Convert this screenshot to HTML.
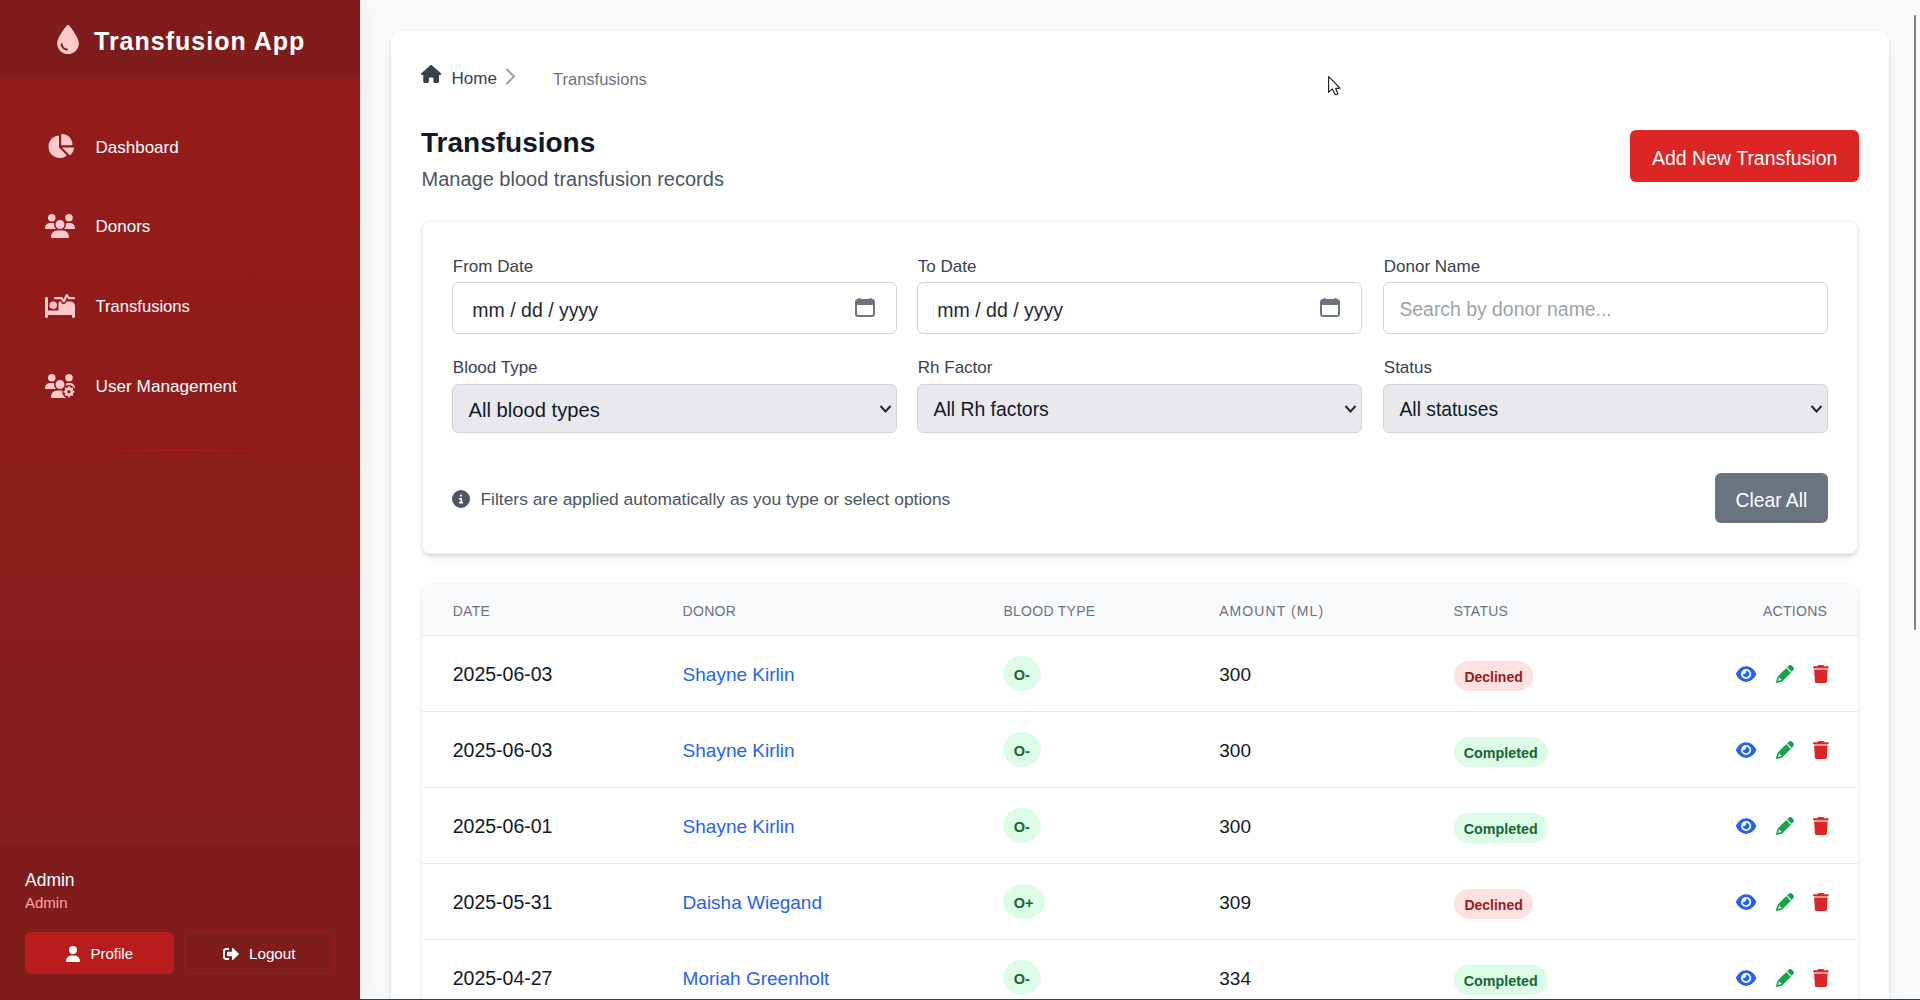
<!DOCTYPE html>
<html><head><meta charset="utf-8"><title>Transfusions</title>
<style>
html,body{margin:0;padding:0;width:1920px;height:1000px;overflow:hidden;background:#f9fafb;font-family:"Liberation Sans",sans-serif;}
.t{position:absolute;white-space:nowrap;line-height:1;}
.b{position:absolute;}
.i{position:absolute;overflow:visible;}
</style></head><body>
<div class="b" style="left:0;top:0;width:360px;height:1000px;z-index:2;box-shadow:2px 0 24px rgba(0,0,0,0.07);">
<div class="b" style="left:0px;top:0px;width:360px;height:1000px;background:linear-gradient(180deg,#991b1b 0%,#7f1d1d 100%);"></div>
<div class="b" style="left:0px;top:0px;width:360px;height:79px;background:#7f1d1d;"></div>
<svg class="i" style="left:57px;top:25px;width:22px;height:29px" viewBox="0 0 384 512" fill="#fecaca"><path d="M192 512C86 512 0 426 0 320C0 228.8 130.2 57.7 166.6 11.7C172.6 4.2 181.5 0 191.1 0h1.8c9.6 0 18.5 4.2 24.5 11.7C253.8 57.7 384 228.8 384 320c0 106-86 192-192 192zM96 336c0-8.8-7.2-16-16-16s-16 7.2-16 16c0 61.9 50.1 112 112 112c8.8 0 16-7.2 16-16s-7.2-16-16-16c-44.2 0-80-35.8-80-80z"/></svg>
<div class="t" style="left:94.0px;top:28.8px;font-size:25px;color:#ffffff;font-weight:700;letter-spacing:0.04em;">Transfusion App</div>
<svg class="i" style="left:46.5px;top:134px;width:27px;height:24px" viewBox="0 0 576 512" fill="#fecaca"><path d="M304 240V16.6c0-9 7-16.6 16-16.6C443.7 0 544 100.3 544 224c0 9-7.6 16-16.6 16H304zM32 272C32 150.7 122.1 50.3 239 34.3c9.2-1.3 17 6.1 17 15.4V288L412.5 444.5c6.7 6.7 6.2 17.7-1.5 23.1C371.8 495.6 323.8 512 272 512C139.5 512 32 404.6 32 272zm526.4 16c9.300 0 16.6 7.8 15.4 17c-7.7 55.9-34.6 105.6-73.9 142.3c-6 5.6-15.4 5.2-21.2-.7L320 288H558.4z"/></svg>
<div class="t" style="left:95.5px;top:138.8px;font-size:17px;color:#ffffff;">Dashboard</div>
<svg class="i" style="left:45.0px;top:214px;width:30px;height:24px" viewBox="0 0 640 512" fill="#fecaca"><path d="M144 0a80 80 0 1 1 0 160A80 80 0 1 1 144 0zM512 0a80 80 0 1 1 0 160A80 80 0 1 1 512 0zM0 298.7C0 239.8 47.8 192 106.7 192h42.7c15.9 0 31 3.5 44.6 9.700c-1.3 7.2-1.9 14.7-1.9 22.3c0 38.2 16.8 72.5 43.3 96c-.2 0-.4 0-.7 0H21.3C9.6 320 0 310.4 0 298.7zM405.3 320c-.2 0-.4 0-.7 0c26.6-23.5 43.3-57.8 43.3-96c0-7.6-.7-15-1.9-22.3c13.6-6.3 28.7-9.7 44.6-9.7h42.7C592.2 192 640 239.8 640 298.7c0 11.8-9.6 21.3-21.3 21.3H405.3zM224 224a96 96 0 1 1 192 0 96 96 0 1 1 -192 0zM128 485.3C128 411.7 187.7 352 261.3 352H378.7C452.3 352 512 411.7 512 485.3c0 14.7-11.9 26.7-26.7 26.7H154.7c-14.7 0-26.7-11.9-26.7-26.7z"/></svg>
<div class="t" style="left:95.5px;top:218.2px;font-size:17px;color:#ffffff;">Donors</div>
<svg class="i" style="left:45.0px;top:294px;width:30px;height:24px" viewBox="0 0 640 512" fill="#fecaca"><path d="M483.2 9.6L524 64h92c13.3 0 24 10.7 24 24s-10.7 24-24 24H512c-7.6 0-14.7-3.6-19.2-9.6L468.7 70.3l-47 99.9c-3.7 7.8-11.3 13.1-19.9 13.7s-16.9-3.4-21.7-10.6L339.2 112H216c-13.3 0-24-10.7-24-24s10.7-24 24-24H352c8 0 15.5 4 20 10.7l24.4 36.6 45.9-97.5C445.9 6.2 453.2 1 461.6 .1s16.6 2.7 21.6 9.5zM320 160h12.7l20.7 31.1c11.2 16.8 30.6 26.3 50.7 24.8s37.9-13.7 46.5-32L461.9 160H544c53 0 96 43 96 96V480c0 17.7-14.3 32-32 32s-32-14.3-32-32V448H352 320 64v32c0 17.7-14.3 32-32 32s-32-14.3-32-32V96C0 78.3 14.3 64 32 64s32 14.3 32 32V352H288V192c0-17.7 14.3-32 32-32zm-144 0a80 80 0 1 1 0 160 80 80 0 1 1 0-160z"/></svg>
<div class="t" style="left:95.5px;top:298.7px;font-size:16.6px;color:#ffffff;">Transfusions</div>
<svg class="i" style="left:45.0px;top:374px;width:30px;height:24px" viewBox="0 0 640 512" fill="#fecaca"><defs><mask id="ugm"><rect x="-50" y="-50" width="800" height="700" fill="#fff"/><circle cx="512" cy="378" r="146" fill="#000"/></mask></defs><g mask="url(#ugm)"><path d="M144 0a80 80 0 1 1 0 160a80 80 0 1 1 0-160zM512 0a80 80 0 1 1 0 160a80 80 0 1 1 0-160zM320 128a96 96 0 1 1 0 192a96 96 0 1 1 0-192zM0 298.7C0 239.8 47.8 192 106.7 192h42.7c15.9 0 31 3.5 44.6 9.7c-1.3 7.2-1.9 14.7-1.9 22.3c0 38.2 16.8 72.5 43.3 96H21.3C9.6 320 0 310.4 0 298.7zM640 298.7C640 239.8 592.2 192 533.3 192h-42.7c-15.9 0-31 3.5-44.6 9.7c1.3 7.2 1.9 14.7 1.9 22.3c0 38.2-16.8 72.5-43.3 96H618.7c11.8 0 21.3-9.6 21.3-21.3zM128 485.3C128 411.7 187.7 352 261.3 352H378.7C452.3 352 512 411.7 512 485.3c0 14.7-11.9 26.7-26.7 26.7H154.7c-14.7 0-26.7-11.9-26.7-26.7z"/></g><path fill-rule="evenodd" d="M601.5 356.5 L628.9 362.3 L628.9 393.7 L601.5 399.5 L590.4 426.1 L605.8 449.6 L583.6 471.8 L560.1 456.4 L533.5 467.5 L527.7 494.9 L496.3 494.9 L490.5 467.5 L463.9 456.4 L440.4 471.8 L418.2 449.6 L433.6 426.1 L422.5 399.5 L395.1 393.7 L395.1 362.3 L422.5 356.5 L433.6 329.9 L418.2 306.4 L440.4 284.2 L463.9 299.6 L490.5 288.5 L496.3 261.1 L527.7 261.1 L533.5 288.5 L560.1 299.6 L583.6 284.2 L605.8 306.4 L590.4 329.9ZM548 378a36 36 0 1 0 -72 0a36 36 0 1 0 72 0z"/></svg>
<div class="t" style="left:95.5px;top:378.2px;font-size:17.2px;color:#ffffff;">User Management</div>
<div class="b" style="left:65px;top:450px;width:230px;height:1px;background:linear-gradient(90deg,rgba(185,28,28,0),#b91c1c 50%,rgba(185,28,28,0));"></div>
<div class="b" style="left:0px;top:841px;width:360px;height:159px;background:#7f1d1d;border-top:1px solid #991b1b;box-sizing:border-box;"></div>
<div class="t" style="left:25.0px;top:872.2px;font-size:17.5px;color:#ffffff;">Admin</div>
<div class="t" style="left:25.0px;top:895.3px;font-size:15px;color:#fca5a5;">Admin</div>
<div class="b" style="left:25px;top:932px;width:149px;height:42px;background:#b91c1c;border-radius:6px;"></div>
<svg class="i" style="left:66px;top:946px;width:14px;height:16px" viewBox="0 0 448 512" fill="#ffffff"><path d="M224 256A128 128 0 1 0 224 0a128 128 0 1 0 0 256zm-45.7 48C79.8 304 0 383.8 0 482.3C0 498.7 13.3 512 29.7 512H418.3c16.4 0 29.7-13.3 29.7-29.7C448 383.8 368.2 304 269.7 304H178.3z"/></svg>
<div class="t" style="left:90.5px;top:946.3px;font-size:15px;color:#ffffff;">Profile</div>
<div class="b" style="left:184px;top:932px;width:151px;height:42px;border:1px solid #991b1b;border-radius:6px;box-sizing:border-box;"></div>
<svg class="i" style="left:223px;top:946px;width:16px;height:16px" viewBox="0 0 512 512" fill="#ffffff"><path d="M497 273L329 441c-15 15-41 4.5-41-17v-96H152c-13.3 0-24-10.7-24-24v-96c0-13.3 10.7-24 24-24h136V88c0-21.4 25.9-32 41-17l168 168c9.3 9.4 9.3 24.6 0 34zM192 436v-40c0-6.6-5.4-12-12-12H96c-17.7 0-32-14.3-32-32V160c0-17.7 14.3-32 32-32h84c6.6 0 12-5.4 12-12V76c0-6.6-5.4-12-12-12H96c-53 0-96 43-96 96v192c0 53 43 96 96 96h84c6.6 0 12-5.4 12-12z"/></svg>
<div class="t" style="left:249.0px;top:946.1px;font-size:15.2px;color:#ffffff;">Logout</div>
</div>
<div class="b" style="left:391px;top:31px;width:1498px;height:1069px;background:#fff;border-radius:8px;box-shadow:0 10px 15px -3px rgba(0,0,0,0.1),0 4px 6px -4px rgba(0,0,0,0.1),0 0 3px rgba(0,0,0,0.07);"></div>
<svg class="i" style="left:421px;top:65px;width:20.25px;height:18px" viewBox="0 0 576 512" fill="#374151"><path d="M575.8 255.5c0 18-15 32.1-32 32.1h-32l.7 160.2c0 2.7-.2 5.4-.5 8.1V472c0 22.1-17.9 40-40 40H456c-1.1 0-2.2 0-3.3-.1c-1.4 .1-2.8 .1-4.2 .1H416 392c-22.1 0-40-17.9-40-40V448 384c0-17.7-14.3-32-32-32H256c-17.7 0-32 14.3-32 32v64 24c0 22.1-17.9 40-40 40H160 128.1c-1.5 0-3-.1-4.5-.2c-1.2 .1-2.4 .2-3.6 .2H104c-22.1 0-40-17.9-40-40V360c0-.9 0-1.9 .1-2.8V287.6H32c-18 0-32-14-32-32.1c0-9 3-17 10-24L266.4 8c7-7 15-8 22-8s15 2 21 7L564.8 231.5c8 7 12 15 11 24z"/></svg>
<div class="t" style="left:451.5px;top:69.6px;font-size:17px;color:#374151;">Home</div>
<svg class="i" style="left:504px;top:67px;width:13px;height:19px" viewBox="0 0 13 19"><polyline points="3,2.5 10,9.5 3,16.5" fill="none" stroke="#9ca3af" stroke-width="2" stroke-linecap="round" stroke-linejoin="round"/></svg>
<div class="t" style="left:553.0px;top:70.7px;font-size:16.5px;color:#6b7280;">Transfusions</div>
<div class="t" style="left:421.0px;top:129.1px;font-size:28px;color:#111827;font-weight:700;">Transfusions</div>
<div class="t" style="left:421.5px;top:168.5px;font-size:20px;color:#4b5563;">Manage blood transfusion records</div>
<div class="b" style="left:1630px;top:130px;width:229px;height:52px;background:#dc2626;border-radius:6px;"></div>
<div class="t" style="left:1652.0px;top:148.5px;font-size:19.5px;color:#ffffff;">Add New Transfusion</div>
<div class="b" style="left:422px;top:221px;width:1436px;height:333px;background:#fff;border-radius:8px;border:1px solid #f3f4f6;box-sizing:border-box;box-shadow:0 4px 6px -1px rgba(0,0,0,0.1),0 2px 4px -2px rgba(0,0,0,0.1),0 0 3px rgba(0,0,0,0.06);"></div>
<div class="t" style="left:452.8px;top:257.6px;font-size:17px;color:#374151;">From Date</div>
<div class="b" style="left:452px;top:282px;width:445px;height:52px;background:#fff;border:1px solid #d1d5db;border-radius:6px;box-sizing:border-box;"></div>
<div class="t" style="left:472.3px;top:300.6px;font-size:19.5px;color:#1f2937;">mm / dd / yyyy</div>
<svg class="i" style="left:855px;top:297px;width:20px;height:20px" viewBox="0 0 20 20"><path d="M4.5 1v2.2M15.5 1v2.2" stroke="#6b7280" stroke-width="2" fill="none"/><rect x="1" y="3" width="18" height="16" rx="2.2" fill="none" stroke="#6b7280" stroke-width="2"/><rect x="1" y="3" width="18" height="5" rx="2" fill="#6b7280"/></svg>
<div class="t" style="left:452.8px;top:359.3px;font-size:17px;color:#374151;">Blood Type</div>
<div class="b" style="left:452px;top:384px;width:445px;height:49px;background:#e9e9ed;border:1px solid #d1d5db;border-radius:6px;box-sizing:border-box;"></div>
<div class="t" style="left:468.5px;top:399.6px;font-size:20.2px;color:#111827;">All blood types</div>
<svg class="i" style="left:879px;top:404px;width:13px;height:10px" viewBox="0 0 13 10"><polyline points="1.5,2 6.5,7.5 11.5,2" fill="none" stroke="#1f2937" stroke-width="2"/></svg>
<div class="t" style="left:917.8px;top:257.6px;font-size:17px;color:#374151;">To Date</div>
<div class="b" style="left:917px;top:282px;width:445px;height:52px;background:#fff;border:1px solid #d1d5db;border-radius:6px;box-sizing:border-box;"></div>
<div class="t" style="left:937.3px;top:300.6px;font-size:19.5px;color:#1f2937;">mm / dd / yyyy</div>
<svg class="i" style="left:1320px;top:297px;width:20px;height:20px" viewBox="0 0 20 20"><path d="M4.5 1v2.2M15.5 1v2.2" stroke="#6b7280" stroke-width="2" fill="none"/><rect x="1" y="3" width="18" height="16" rx="2.2" fill="none" stroke="#6b7280" stroke-width="2"/><rect x="1" y="3" width="18" height="5" rx="2" fill="#6b7280"/></svg>
<div class="t" style="left:917.8px;top:359.3px;font-size:17px;color:#374151;">Rh Factor</div>
<div class="b" style="left:917px;top:384px;width:445px;height:49px;background:#e9e9ed;border:1px solid #d1d5db;border-radius:6px;box-sizing:border-box;"></div>
<div class="t" style="left:933.5px;top:400.3px;font-size:19.4px;color:#111827;">All Rh factors</div>
<svg class="i" style="left:1344px;top:404px;width:13px;height:10px" viewBox="0 0 13 10"><polyline points="1.5,2 6.5,7.5 11.5,2" fill="none" stroke="#1f2937" stroke-width="2"/></svg>
<div class="t" style="left:1383.8px;top:257.6px;font-size:17px;color:#374151;">Donor Name</div>
<div class="b" style="left:1383px;top:282px;width:445px;height:52px;background:#fff;border:1px solid #d1d5db;border-radius:6px;box-sizing:border-box;"></div>
<div class="t" style="left:1399.4px;top:300.1px;font-size:19.4px;color:#9ca3af;">Search by donor name...</div>
<div class="t" style="left:1383.8px;top:359.3px;font-size:17px;color:#374151;">Status</div>
<div class="b" style="left:1383px;top:384px;width:445px;height:49px;background:#e9e9ed;border:1px solid #d1d5db;border-radius:6px;box-sizing:border-box;"></div>
<div class="t" style="left:1399.5px;top:400.4px;font-size:19.3px;color:#111827;">All statuses</div>
<svg class="i" style="left:1810px;top:404px;width:13px;height:10px" viewBox="0 0 13 10"><polyline points="1.5,2 6.5,7.5 11.5,2" fill="none" stroke="#1f2937" stroke-width="2"/></svg>
<svg class="i" style="left:452px;top:490px;width:18px;height:18px" viewBox="0 0 512 512" fill="#4b5563"><path d="M256 512A256 256 0 1 0 256 0a256 256 0 1 0 0 512zM216 336h24V272H216c-13.3 0-24-10.7-24-24s10.7-24 24-24h48c13.3 0 24 10.7 24 24v88h8c13.3 0 24 10.7 24 24s-10.7 24-24 24H216c-13.3 0-24-10.7-24-24s10.7-24 24-24zm40-208a32 32 0 1 1 0 64 32 32 0 1 1 0-64z"/></svg>
<div class="t" style="left:480.5px;top:491.3px;font-size:17.4px;color:#4b5563;">Filters are applied automatically as you type or select options</div>
<div class="b" style="left:1715px;top:473px;width:113px;height:50px;background:#6b7280;border-radius:6px;"></div>
<div class="t" style="left:1735.5px;top:490.7px;font-size:19.3px;color:#ffffff;">Clear All</div>
<div class="b" style="left:422px;top:584px;width:1436px;height:516px;background:#fff;border-radius:8px;box-shadow:0 4px 6px -1px rgba(0,0,0,0.1),0 2px 4px -2px rgba(0,0,0,0.1),0 0 3px rgba(0,0,0,0.06);"></div>
<div class="b" style="left:422px;top:584px;width:1436px;height:52px;background:#f9fafb;border-radius:8px 8px 0 0;border-bottom:1px solid #e5e7eb;box-sizing:border-box;"></div>
<div class="t" style="left:452.7px;top:603.9px;font-size:14px;color:#6b7280;letter-spacing:0.02em;">DATE</div>
<div class="t" style="left:682.6px;top:603.9px;font-size:14px;color:#6b7280;letter-spacing:0.02em;">DONOR</div>
<div class="t" style="left:1003.4px;top:603.9px;font-size:14px;color:#6b7280;letter-spacing:0.02em;">BLOOD TYPE</div>
<div class="t" style="left:1219.2px;top:603.9px;font-size:14px;color:#6b7280;letter-spacing:0.077em;">AMOUNT (ML)</div>
<div class="t" style="left:1453.4px;top:603.9px;font-size:14px;color:#6b7280;letter-spacing:0.02em;">STATUS</div>
<div class="t" style="left:1763.0px;top:603.9px;font-size:14px;color:#6b7280;letter-spacing:0.02em;">ACTIONS</div>
<div class="b" style="left:422px;top:711px;width:1436px;height:1px;background:#e5e7eb;"></div>
<div class="t" style="left:452.7px;top:665.2px;font-size:19.5px;color:#111827;">2025-06-03</div>
<div class="t" style="left:682.6px;top:665.2px;font-size:19px;color:#2563eb;">Shayne Kirlin</div>
<div class="b" style="left:1003px;top:656px;width:38px;height:35px;background:#dcfce7;border-radius:50%;"></div>
<div class="t" style="left:1013.8px;top:667.7px;font-size:14.5px;color:#166534;font-weight:700;">O-</div>
<div class="t" style="left:1219.3px;top:665.4px;font-size:19px;color:#111827;">300</div>
<div class="b" style="left:1454px;top:661px;width:79px;height:30px;background:#fee2e2;border-radius:15px;"></div>
<div class="t" style="left:1464.4px;top:670.1px;font-size:14px;color:#991b1b;font-weight:700;">Declined</div>
<svg class="i" style="left:1736px;top:665px;width:20.25px;height:18px" viewBox="0 0 576 512" fill="#2563eb"><path d="M288 32c-80.8 0-145.5 36.8-192.6 80.6C48.6 156 17.3 208 2.5 243.7c-3.3 7.9-3.3 16.7 0 24.6C17.3 304 48.6 356 95.4 399.4C142.5 443.2 207.2 480 288 480s145.5-36.8 192.6-80.6c46.8-43.5 78.1-95.4 93-131.1c3.3-7.9 3.3-16.7 0-24.6c-14.9-35.7-46.2-87.7-93-131.1C433.5 68.8 368.8 32 288 32zM144 256a144 144 0 1 1 288 0 144 144 0 1 1 -288 0zm144-64c0 35.3-28.7 64-64 64c-7.1 0-13.9-1.2-20.3-3.3c-5.5-1.8-11.9 1.6-11.7 7.4c.3 6.9 1.3 13.8 3.2 20.7c13.7 51.2 66.4 81.600 117.6 67.9s81.6-66.4 67.9-117.6c-11.1-41.5-47.8-69.4-88.6-71.1c-5.8-.2-9.2 6.1-7.4 11.7c2.1 6.4 3.3 13.2 3.3 20.3z"/></svg>
<svg class="i" style="left:1776px;top:665px;width:18px;height:18px" viewBox="0 0 512 512" fill="#16a34a"><path d="M410.3 231l11.3-11.3-33.9-33.9-62.1-62.1L291.7 89.8l-11.3 11.3-22.6 22.6L58.6 322.9c-10.4 10.4-18 23.3-22.2 37.4L1 480.7c-2.5 8.4-.2 17.5 6.1 23.7s15.3 8.5 23.7 6.1l120.3-35.4c14.1-4.2 27-11.8 37.4-22.2L387.7 253.7 410.3 231zM160 399.4l-9.1 22.7c-4 3.1-8.5 5.4-13.3 6.9L59.4 452l23-78.1c1.4-4.9 3.8-9.4 6.9-13.3l22.7-9.1v32c0 8.8 7.2 16 16 16h32zM362.7 18.7L348.3 33.2 325.7 55.8 314.3 67.1l33.9 33.9 62.1 62.1 33.9 33.9 11.3-11.3 22.6-22.6 14.5-14.5c25-25 25-65.5 0-90.5L453.3 18.7c-25-25-65.5-25-90.5 0z"/></svg>
<svg class="i" style="left:1812.5px;top:665px;width:15.75px;height:18px" viewBox="0 0 448 512" fill="#dc2626"><path d="M135.2 17.7L128 32H32C14.3 32 0 46.3 0 64S14.3 96 32 96H416c17.7 0 32-14.3 32-32s-14.3-32-32-32H320l-7.2-14.3C307.4 6.8 296.3 0 284.2 0H163.8c-12.1 0-23.2 6.8-28.6 17.7zM416 128H32L53.2 467c1.6 25.3 22.6 45 47.9 45H346.9c25.3 0 46.3-19.7 47.9-45L416 128z"/></svg>
<div class="b" style="left:422px;top:787px;width:1436px;height:1px;background:#e5e7eb;"></div>
<div class="t" style="left:452.7px;top:741.2px;font-size:19.5px;color:#111827;">2025-06-03</div>
<div class="t" style="left:682.6px;top:741.2px;font-size:19px;color:#2563eb;">Shayne Kirlin</div>
<div class="b" style="left:1003px;top:732px;width:38px;height:35px;background:#dcfce7;border-radius:50%;"></div>
<div class="t" style="left:1013.8px;top:743.7px;font-size:14.5px;color:#166534;font-weight:700;">O-</div>
<div class="t" style="left:1219.3px;top:741.4px;font-size:19px;color:#111827;">300</div>
<div class="b" style="left:1454px;top:737px;width:94px;height:30px;background:#dcfce7;border-radius:15px;"></div>
<div class="t" style="left:1463.8px;top:745.9px;font-size:14.3px;color:#166534;font-weight:700;">Completed</div>
<svg class="i" style="left:1736px;top:741px;width:20.25px;height:18px" viewBox="0 0 576 512" fill="#2563eb"><path d="M288 32c-80.8 0-145.5 36.8-192.6 80.6C48.6 156 17.3 208 2.5 243.7c-3.3 7.9-3.3 16.7 0 24.6C17.3 304 48.6 356 95.4 399.4C142.5 443.2 207.2 480 288 480s145.5-36.8 192.6-80.6c46.8-43.5 78.1-95.4 93-131.1c3.3-7.9 3.3-16.7 0-24.6c-14.9-35.7-46.2-87.7-93-131.1C433.5 68.8 368.8 32 288 32zM144 256a144 144 0 1 1 288 0 144 144 0 1 1 -288 0zm144-64c0 35.3-28.7 64-64 64c-7.1 0-13.9-1.2-20.3-3.3c-5.5-1.8-11.9 1.6-11.7 7.4c.3 6.9 1.3 13.8 3.2 20.7c13.7 51.2 66.4 81.600 117.6 67.9s81.6-66.4 67.9-117.6c-11.1-41.5-47.8-69.4-88.6-71.1c-5.8-.2-9.2 6.1-7.4 11.7c2.1 6.4 3.3 13.2 3.3 20.3z"/></svg>
<svg class="i" style="left:1776px;top:741px;width:18px;height:18px" viewBox="0 0 512 512" fill="#16a34a"><path d="M410.3 231l11.3-11.3-33.9-33.9-62.1-62.1L291.7 89.8l-11.3 11.3-22.6 22.6L58.6 322.9c-10.4 10.4-18 23.3-22.2 37.4L1 480.7c-2.5 8.4-.2 17.5 6.1 23.7s15.3 8.5 23.7 6.1l120.3-35.4c14.1-4.2 27-11.8 37.4-22.2L387.7 253.7 410.3 231zM160 399.4l-9.1 22.7c-4 3.1-8.5 5.4-13.3 6.9L59.4 452l23-78.1c1.4-4.9 3.8-9.4 6.9-13.3l22.7-9.1v32c0 8.8 7.2 16 16 16h32zM362.7 18.7L348.3 33.2 325.7 55.8 314.3 67.1l33.9 33.9 62.1 62.1 33.9 33.9 11.3-11.3 22.6-22.6 14.5-14.5c25-25 25-65.5 0-90.5L453.3 18.7c-25-25-65.5-25-90.5 0z"/></svg>
<svg class="i" style="left:1812.5px;top:741px;width:15.75px;height:18px" viewBox="0 0 448 512" fill="#dc2626"><path d="M135.2 17.7L128 32H32C14.3 32 0 46.3 0 64S14.3 96 32 96H416c17.7 0 32-14.3 32-32s-14.3-32-32-32H320l-7.2-14.3C307.4 6.8 296.3 0 284.2 0H163.8c-12.1 0-23.2 6.8-28.6 17.7zM416 128H32L53.2 467c1.6 25.3 22.6 45 47.9 45H346.9c25.3 0 46.3-19.7 47.9-45L416 128z"/></svg>
<div class="b" style="left:422px;top:863px;width:1436px;height:1px;background:#e5e7eb;"></div>
<div class="t" style="left:452.7px;top:817.2px;font-size:19.5px;color:#111827;">2025-06-01</div>
<div class="t" style="left:682.6px;top:817.2px;font-size:19px;color:#2563eb;">Shayne Kirlin</div>
<div class="b" style="left:1003px;top:808px;width:38px;height:35px;background:#dcfce7;border-radius:50%;"></div>
<div class="t" style="left:1013.8px;top:819.7px;font-size:14.5px;color:#166534;font-weight:700;">O-</div>
<div class="t" style="left:1219.3px;top:817.4px;font-size:19px;color:#111827;">300</div>
<div class="b" style="left:1454px;top:813px;width:94px;height:30px;background:#dcfce7;border-radius:15px;"></div>
<div class="t" style="left:1463.8px;top:821.9px;font-size:14.3px;color:#166534;font-weight:700;">Completed</div>
<svg class="i" style="left:1736px;top:817px;width:20.25px;height:18px" viewBox="0 0 576 512" fill="#2563eb"><path d="M288 32c-80.8 0-145.5 36.8-192.6 80.6C48.6 156 17.3 208 2.5 243.7c-3.3 7.9-3.3 16.7 0 24.6C17.3 304 48.6 356 95.4 399.4C142.5 443.2 207.2 480 288 480s145.5-36.8 192.6-80.6c46.8-43.5 78.1-95.4 93-131.1c3.3-7.9 3.3-16.7 0-24.6c-14.9-35.7-46.2-87.7-93-131.1C433.5 68.8 368.8 32 288 32zM144 256a144 144 0 1 1 288 0 144 144 0 1 1 -288 0zm144-64c0 35.3-28.7 64-64 64c-7.1 0-13.9-1.2-20.3-3.3c-5.5-1.8-11.9 1.6-11.7 7.4c.3 6.9 1.3 13.8 3.2 20.7c13.7 51.2 66.4 81.600 117.6 67.9s81.6-66.4 67.9-117.6c-11.1-41.5-47.8-69.4-88.6-71.1c-5.8-.2-9.2 6.1-7.4 11.7c2.1 6.4 3.3 13.2 3.3 20.3z"/></svg>
<svg class="i" style="left:1776px;top:817px;width:18px;height:18px" viewBox="0 0 512 512" fill="#16a34a"><path d="M410.3 231l11.3-11.3-33.9-33.9-62.1-62.1L291.7 89.8l-11.3 11.3-22.6 22.6L58.6 322.9c-10.4 10.4-18 23.3-22.2 37.4L1 480.7c-2.5 8.4-.2 17.5 6.1 23.7s15.3 8.5 23.7 6.1l120.3-35.4c14.1-4.2 27-11.8 37.4-22.2L387.7 253.7 410.3 231zM160 399.4l-9.1 22.7c-4 3.1-8.5 5.4-13.3 6.9L59.4 452l23-78.1c1.4-4.9 3.8-9.4 6.9-13.3l22.7-9.1v32c0 8.8 7.2 16 16 16h32zM362.7 18.7L348.3 33.2 325.7 55.8 314.3 67.1l33.9 33.9 62.1 62.1 33.9 33.9 11.3-11.3 22.6-22.6 14.5-14.5c25-25 25-65.5 0-90.5L453.3 18.7c-25-25-65.5-25-90.5 0z"/></svg>
<svg class="i" style="left:1812.5px;top:817px;width:15.75px;height:18px" viewBox="0 0 448 512" fill="#dc2626"><path d="M135.2 17.7L128 32H32C14.3 32 0 46.3 0 64S14.3 96 32 96H416c17.7 0 32-14.3 32-32s-14.3-32-32-32H320l-7.2-14.3C307.4 6.8 296.3 0 284.2 0H163.8c-12.1 0-23.2 6.8-28.6 17.7zM416 128H32L53.2 467c1.6 25.3 22.6 45 47.9 45H346.9c25.3 0 46.3-19.7 47.9-45L416 128z"/></svg>
<div class="b" style="left:422px;top:939px;width:1436px;height:1px;background:#e5e7eb;"></div>
<div class="t" style="left:452.7px;top:893.2px;font-size:19.5px;color:#111827;">2025-05-31</div>
<div class="t" style="left:682.6px;top:893.2px;font-size:19px;color:#2563eb;">Daisha Wiegand</div>
<div class="b" style="left:1003px;top:884px;width:42px;height:35px;background:#dcfce7;border-radius:50%;"></div>
<div class="t" style="left:1013.8px;top:895.7px;font-size:14.5px;color:#166534;font-weight:700;">O+</div>
<div class="t" style="left:1219.3px;top:893.4px;font-size:19px;color:#111827;">309</div>
<div class="b" style="left:1454px;top:889px;width:79px;height:30px;background:#fee2e2;border-radius:15px;"></div>
<div class="t" style="left:1464.4px;top:898.1px;font-size:14px;color:#991b1b;font-weight:700;">Declined</div>
<svg class="i" style="left:1736px;top:893px;width:20.25px;height:18px" viewBox="0 0 576 512" fill="#2563eb"><path d="M288 32c-80.8 0-145.5 36.8-192.6 80.6C48.6 156 17.3 208 2.5 243.7c-3.3 7.9-3.3 16.7 0 24.6C17.3 304 48.6 356 95.4 399.4C142.5 443.2 207.2 480 288 480s145.5-36.8 192.6-80.6c46.8-43.5 78.1-95.4 93-131.1c3.3-7.9 3.3-16.7 0-24.6c-14.9-35.7-46.2-87.7-93-131.1C433.5 68.8 368.8 32 288 32zM144 256a144 144 0 1 1 288 0 144 144 0 1 1 -288 0zm144-64c0 35.3-28.7 64-64 64c-7.1 0-13.9-1.2-20.3-3.3c-5.5-1.8-11.9 1.6-11.7 7.4c.3 6.9 1.3 13.8 3.2 20.7c13.7 51.2 66.4 81.600 117.6 67.9s81.6-66.4 67.9-117.6c-11.1-41.5-47.8-69.4-88.6-71.1c-5.8-.2-9.2 6.1-7.4 11.7c2.1 6.4 3.3 13.2 3.3 20.3z"/></svg>
<svg class="i" style="left:1776px;top:893px;width:18px;height:18px" viewBox="0 0 512 512" fill="#16a34a"><path d="M410.3 231l11.3-11.3-33.9-33.9-62.1-62.1L291.7 89.8l-11.3 11.3-22.6 22.6L58.6 322.9c-10.4 10.4-18 23.3-22.2 37.4L1 480.7c-2.5 8.4-.2 17.5 6.1 23.7s15.3 8.5 23.7 6.1l120.3-35.4c14.1-4.2 27-11.8 37.4-22.2L387.7 253.7 410.3 231zM160 399.4l-9.1 22.7c-4 3.1-8.5 5.4-13.3 6.9L59.4 452l23-78.1c1.4-4.9 3.8-9.4 6.9-13.3l22.7-9.1v32c0 8.8 7.2 16 16 16h32zM362.7 18.7L348.3 33.2 325.7 55.8 314.3 67.1l33.9 33.9 62.1 62.1 33.9 33.9 11.3-11.3 22.6-22.6 14.5-14.5c25-25 25-65.5 0-90.5L453.3 18.7c-25-25-65.5-25-90.5 0z"/></svg>
<svg class="i" style="left:1812.5px;top:893px;width:15.75px;height:18px" viewBox="0 0 448 512" fill="#dc2626"><path d="M135.2 17.7L128 32H32C14.3 32 0 46.3 0 64S14.3 96 32 96H416c17.7 0 32-14.3 32-32s-14.3-32-32-32H320l-7.2-14.3C307.4 6.8 296.3 0 284.2 0H163.8c-12.1 0-23.2 6.8-28.6 17.7zM416 128H32L53.2 467c1.6 25.3 22.6 45 47.9 45H346.9c25.3 0 46.3-19.7 47.9-45L416 128z"/></svg>
<div class="t" style="left:452.7px;top:969.2px;font-size:19.5px;color:#111827;">2025-04-27</div>
<div class="t" style="left:682.6px;top:969.2px;font-size:19px;color:#2563eb;">Moriah Greenholt</div>
<div class="b" style="left:1003px;top:960px;width:38px;height:35px;background:#dcfce7;border-radius:50%;"></div>
<div class="t" style="left:1013.8px;top:971.7px;font-size:14.5px;color:#166534;font-weight:700;">O-</div>
<div class="t" style="left:1219.3px;top:969.4px;font-size:19px;color:#111827;">334</div>
<div class="b" style="left:1454px;top:965px;width:94px;height:30px;background:#dcfce7;border-radius:15px;"></div>
<div class="t" style="left:1463.8px;top:973.9px;font-size:14.3px;color:#166534;font-weight:700;">Completed</div>
<svg class="i" style="left:1736px;top:969px;width:20.25px;height:18px" viewBox="0 0 576 512" fill="#2563eb"><path d="M288 32c-80.8 0-145.5 36.8-192.6 80.6C48.6 156 17.3 208 2.5 243.7c-3.3 7.9-3.3 16.7 0 24.6C17.3 304 48.6 356 95.4 399.4C142.5 443.2 207.2 480 288 480s145.5-36.8 192.6-80.6c46.8-43.5 78.1-95.4 93-131.1c3.3-7.9 3.3-16.7 0-24.6c-14.9-35.7-46.2-87.7-93-131.1C433.5 68.8 368.8 32 288 32zM144 256a144 144 0 1 1 288 0 144 144 0 1 1 -288 0zm144-64c0 35.3-28.7 64-64 64c-7.1 0-13.9-1.2-20.3-3.3c-5.5-1.8-11.9 1.6-11.7 7.4c.3 6.9 1.3 13.8 3.2 20.7c13.7 51.2 66.4 81.600 117.6 67.9s81.6-66.4 67.9-117.6c-11.1-41.5-47.8-69.4-88.6-71.1c-5.8-.2-9.2 6.1-7.4 11.7c2.1 6.4 3.3 13.2 3.3 20.3z"/></svg>
<svg class="i" style="left:1776px;top:969px;width:18px;height:18px" viewBox="0 0 512 512" fill="#16a34a"><path d="M410.3 231l11.3-11.3-33.9-33.9-62.1-62.1L291.7 89.8l-11.3 11.3-22.6 22.6L58.6 322.9c-10.4 10.4-18 23.3-22.2 37.4L1 480.7c-2.5 8.4-.2 17.5 6.1 23.7s15.3 8.5 23.7 6.1l120.3-35.4c14.1-4.2 27-11.8 37.4-22.2L387.7 253.7 410.3 231zM160 399.4l-9.1 22.7c-4 3.1-8.5 5.4-13.3 6.9L59.4 452l23-78.1c1.4-4.9 3.8-9.4 6.9-13.3l22.7-9.1v32c0 8.8 7.2 16 16 16h32zM362.7 18.7L348.3 33.2 325.7 55.8 314.3 67.1l33.9 33.9 62.1 62.1 33.9 33.9 11.3-11.3 22.6-22.6 14.5-14.5c25-25 25-65.5 0-90.5L453.3 18.7c-25-25-65.5-25-90.5 0z"/></svg>
<svg class="i" style="left:1812.5px;top:969px;width:15.75px;height:18px" viewBox="0 0 448 512" fill="#dc2626"><path d="M135.2 17.7L128 32H32C14.3 32 0 46.3 0 64S14.3 96 32 96H416c17.7 0 32-14.3 32-32s-14.3-32-32-32H320l-7.2-14.3C307.4 6.8 296.3 0 284.2 0H163.8c-12.1 0-23.2 6.8-28.6 17.7zM416 128H32L53.2 467c1.6 25.3 22.6 45 47.9 45H346.9c25.3 0 46.3-19.7 47.9-45L416 128z"/></svg>
<div class="b" style="left:1914px;top:15px;width:2px;height:615px;background:#7d7d7d;border-radius:1px;"></div>
<div class="b" style="left:0px;top:999px;width:1920px;height:1px;background:#3c4043;"></div>
<svg class="i" style="left:1327px;top:75px;width:16px;height:22px;z-index:5" viewBox="0 0 16 22"><path d="M1.6 1.6 L1.6 17.4 L5.4 13.9 L8.2 19.7 L11 18.7 L8.6 13.4 L13 13.2 Z" fill="#fff" stroke="#15151f" stroke-width="1.1" stroke-linejoin="round"/></svg>
</body></html>
